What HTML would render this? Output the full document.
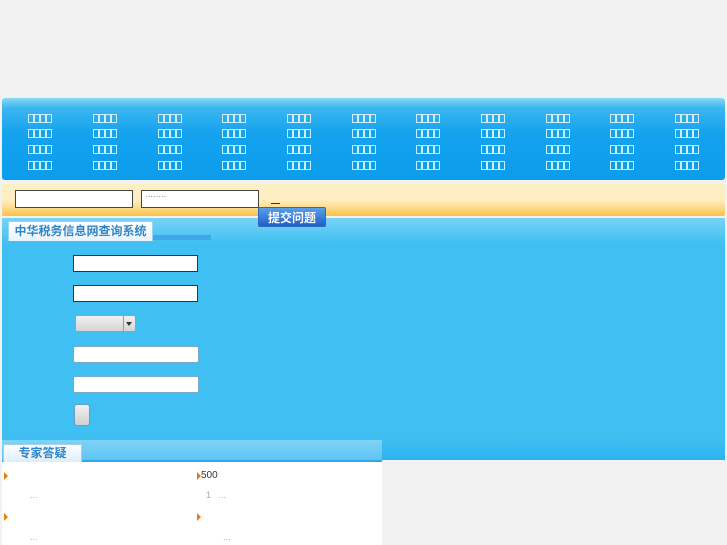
<!DOCTYPE html>
<html><head><meta charset="utf-8"><style>
body{margin:0;width:727px;height:545px;background:#f2f2f2;position:relative;overflow:hidden;font-family:"Liberation Sans","Noto Sans CJK SC",sans-serif}
.a{position:absolute}
#nav{left:2px;top:98px;width:723px;height:82px;background:linear-gradient(#8ad8f7 0,#3bb6f0 10px,#15a3ee 35px,#0b9cec);border-radius:3px}
.m{position:absolute;height:9px;width:25px}
.m i{display:inline-block;width:4px;height:7px;border:1px solid #cfeefc;margin-right:0px;box-sizing:content-box}
#ob{left:2px;top:184px;width:723px;height:32px;background:linear-gradient(#fdefc4 0,#feeec2 16px,#fdd882 25px,#fbc042);border-radius:2px}
.in{position:absolute;background:#fff;border:1px solid #444;box-sizing:border-box}
#blue{left:2px;top:218px;width:723px;height:242px;background:linear-gradient(#79d3f7 0,#40c0f2 25px,#3fbff2 220px,#2cb3ef)}
.tab{position:absolute;background:linear-gradient(#fff,#e8f4fc);border:1px solid #9cd2ef;border-bottom:none;color:#2e86c8;font-weight:bold;font-size:12px}
.f{position:absolute;background:#fff;border:1px solid #333;box-sizing:border-box}
.f2{position:absolute;background:#fff;border:1px solid #7aaac8;border-radius:2px;box-sizing:border-box}
.arr{position:absolute;width:0;height:0;border-left:4px solid #f07a10;border-top:4px solid transparent;border-bottom:4px solid transparent}
</style></head><body>
<div class="a" id="nav"></div>
<div id="menu"></div>
<div class="a" id="ob"></div>
<div class="in" style="left:15px;top:190px;width:118px;height:18px"></div>
<div class="in" style="left:141px;top:190px;width:118px;height:18px;font-size:8px;color:#666;padding:1px 3px;letter-spacing:0">········</div>
<div class="a" style="left:263px;top:198px;font-size:6px;color:#777">·</div>
<div class="a" style="left:271px;top:203px;width:9px;height:1px;background:#333"></div>
<div class="a" id="blue"></div>
<div class="a" style="left:258px;top:207px;width:68px;height:20px;background:linear-gradient(#5aa0ea,#1e5fc6);border:1px solid #2a6ac0;border-radius:2px;color:#fff;font-size:12px;font-weight:bold;text-align:center;line-height:20px;box-sizing:border-box">提交问题</div>
<div class="a" style="left:150px;top:235px;width:61px;height:5px;background:#3fa8e8"></div>
<div class="tab" style="left:8px;top:221px;width:143px;height:19px;line-height:19px;text-align:center">中华税务信息网查询系统</div>
<div class="f" style="left:73px;top:255px;width:125px;height:17px"></div>
<div class="f" style="left:73px;top:285px;width:125px;height:17px"></div>
<div class="a" style="left:75px;top:315px;width:61px;height:17px;background:linear-gradient(#f2f2f2,#d4d4d4);border:1px solid #7aaac8;border-radius:2px;box-sizing:border-box"><div class="a" style="left:47px;top:0;width:1px;height:15px;background:#999"></div><div class="a" style="left:50px;top:6px;border-top:4px solid #333;border-left:3px solid transparent;border-right:3px solid transparent"></div></div>
<div class="f2" style="left:73px;top:346px;width:126px;height:17px"></div>
<div class="f2" style="left:73px;top:376px;width:126px;height:17px"></div>
<div class="a" style="left:74px;top:404px;width:16px;height:22px;background:linear-gradient(#f2f2f2,#d0d0d0);border:1px solid #6a9ec0;border-radius:3px;box-sizing:border-box"></div>
<div class="a" style="left:2px;top:440px;width:380px;height:22px;background:linear-gradient(#7fd3f7,#5dc4f3);border-bottom:2px solid #33a7e6;box-sizing:border-box"></div>
<div class="tab" style="left:3px;top:444px;width:77px;height:18px;line-height:17px;text-align:center;background:linear-gradient(#fff,#dcecf8)">专家答疑</div>
<div class="a" style="left:2px;top:462px;width:380px;height:83px;background:#fff"></div>
<div class="arr" style="left:4px;top:472px"></div>
<div class="arr" style="left:197px;top:472px"></div>
<div class="arr" style="left:4px;top:513px"></div>
<div class="arr" style="left:197px;top:513px"></div>
<div class="a" style="left:201px;top:470px;font-size:10px;color:#333">500</div>
<div class="a" style="left:30px;top:490px;font-size:9px;color:#aaa">...</div>
<div class="a" style="left:206px;top:490px;font-size:9px;color:#aaa">1 &nbsp; ...</div>
<div class="a" style="left:30px;top:532px;font-size:9px;color:#aaa">...</div>
<div class="a" style="left:223px;top:532px;font-size:9px;color:#aaa">...</div>
<script>
var xs=[28,93,158,222,287,352,416,481,546,610,675],ys=[110,125,141,157],h='';
ys.forEach(function(y){xs.forEach(function(x){h+='<div class="m" style="left:'+x+'px;top:'+y+'px"><i></i><i></i><i></i><i></i></div>';});});
document.getElementById('menu').innerHTML=h;
</script>
</body></html>
